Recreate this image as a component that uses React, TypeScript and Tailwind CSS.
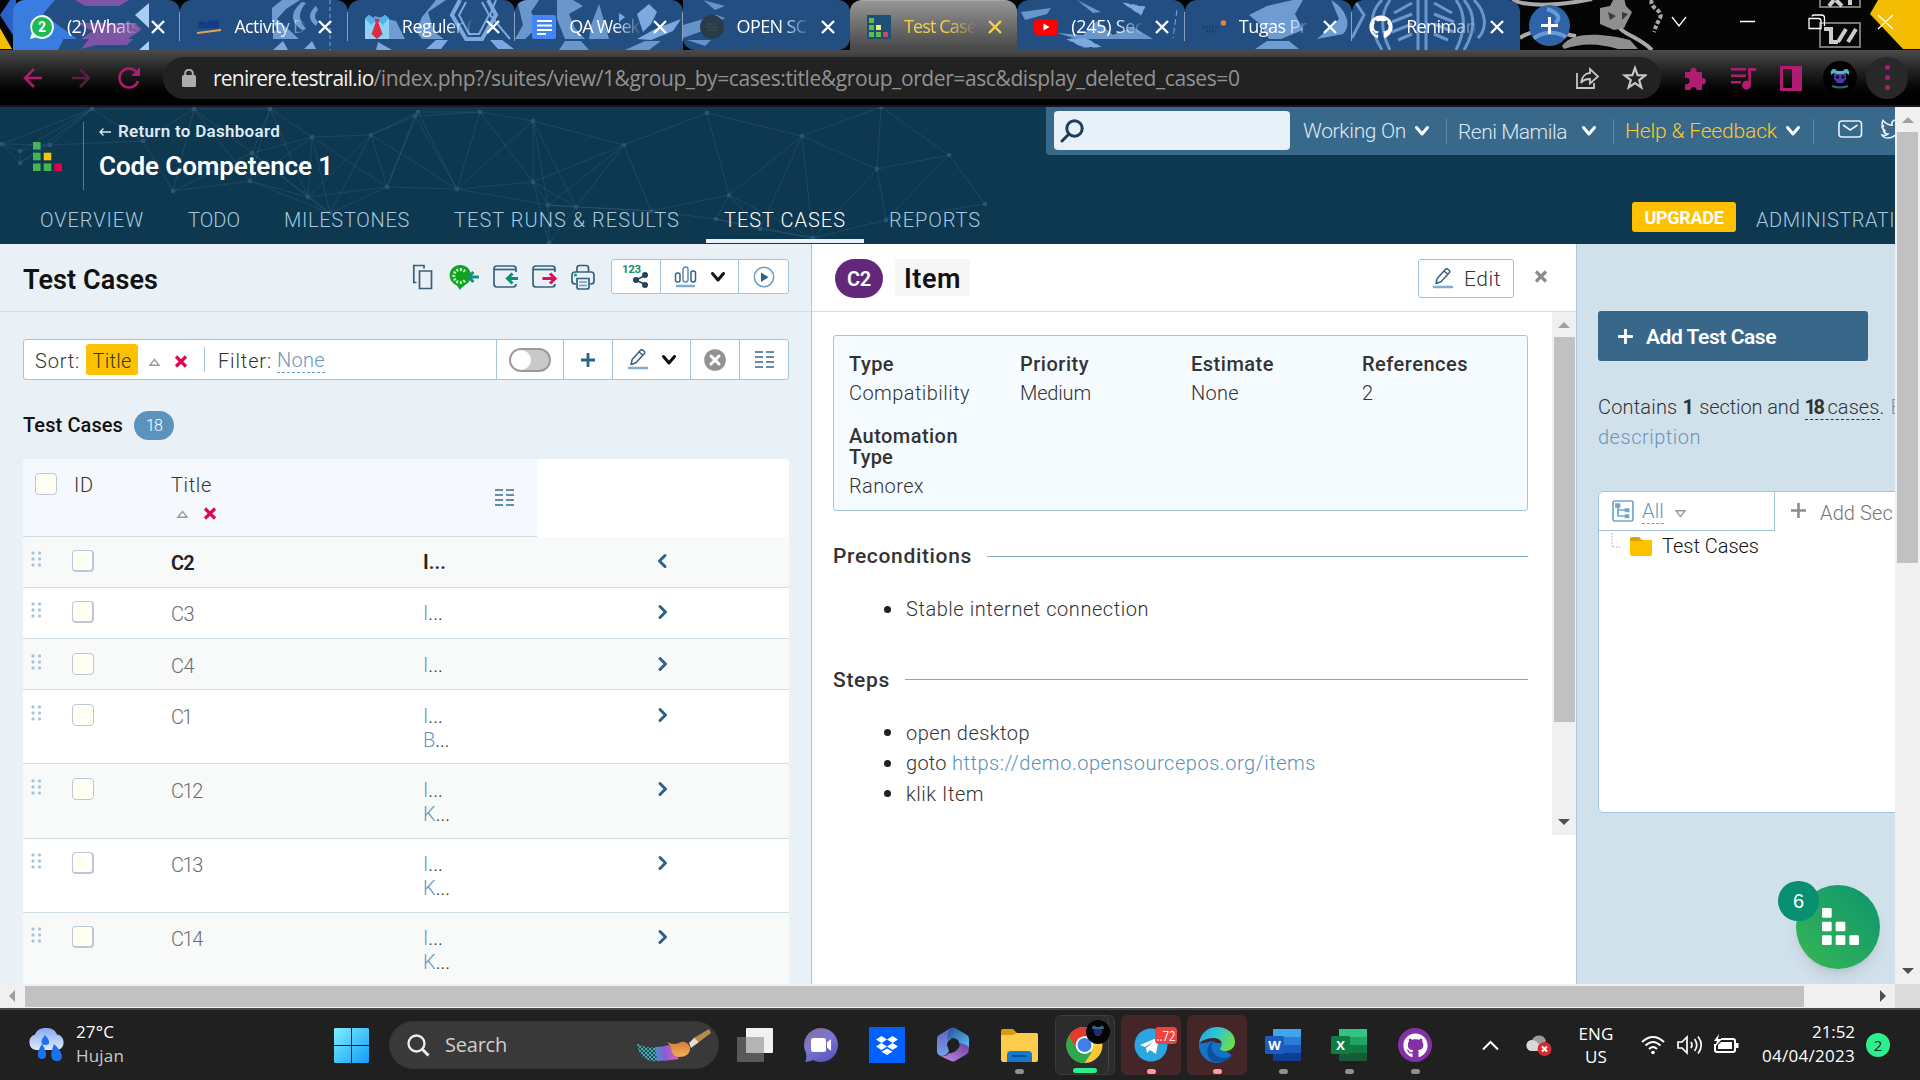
import React, { useLayoutEffect, useRef } from "react";
import { FaGithub } from "react-icons/fa";

/** Single line of text whose tracking is adjusted so that it spans `w` pixels. */
function T({ w, className = "", children }: { w: number; className?: string; children: React.ReactNode }) {
  const ref = useRef<HTMLSpanElement>(null);
  useLayoutEffect(() => {
    const el = ref.current;
    if (!el) return;
    el.style.letterSpacing = "0px";
    const n = (el.textContent || "").length;
    const natural = el.getBoundingClientRect().width;
    el.style.letterSpacing = `${(w - natural) / Math.max(1, n)}px`;
  }, [w]);
  return (
    <span ref={ref} className={"inline-block shrink-0 whitespace-pre " + className}>
      {children}
    </span>
  );
}

const UI = "font-['Open_Sans','Noto_Sans',sans-serif] font-normal";

/* ---------- Browser chrome ---------- */

function StripArt() {
  return (
    <svg className="absolute inset-0" width="1920" height="50" viewBox="0 0 1920 50">
      <rect width="1920" height="50" fill="#050505" />
      <g fill="none" stroke="#a9a9a9" strokeWidth="4">
        <path d="M1512 0c20 8 50 5 80-1M1520 38c20-14 40-4 56-2" />
        <path d="M1652 0c-4 8 12 10 8 18s-4 8-6 14" strokeDasharray="4 2" />
        <path d="M1618 24c2 10 20 12 34 26" />
      </g>
      <path d="M1562 46c10-16 45-12 68-6l8 9h-20c-20-6-36-6-54 0zM1600 8l10-2 4-8h10l2 8 6 6-8 16-10 2-14-6z" fill="#8f8f8f" />
      <path d="M1608 12l8 4-6 4zM1622 12l6 2-6 6z" fill="#3a3a3a" />
      <g fill="none" stroke="#777" strokeWidth="2">
        <rect x="1820" y="-12" width="40" height="19" />
        <rect x="1820" y="23" width="40" height="24" />
      </g>
      <path d="M1824 29h7v13h7M1846 29l-8 13M1856 29l-8 13M1829 6l5-6M1836 0l6 6M1850 0v5" stroke="#ccc" strokeWidth="4" fill="none" />
      <path d="M1870 14l8-14h42v49h-17z" fill="#f5bd02" />
      <path d="M0 28l12 21H0z" fill="#f5bd02" />
      <path d="M0 15L10 0h6v40z" fill="#2a62c8" />
    </svg>
  );
}

function TabArt({ i }: { i: number }) {
  const c = "#7ba9e0";
  return (
    <svg className="absolute inset-0" width="168" height="50" viewBox="0 0 168 50">
      {i === 0 && (
        <g>
          <path d="M0 0h42L30 14l34 25H40v-2L28 50H0z" fill="#3a7de0" />
          <path d="M0 50V38h63l-12 0-6 12z" fill="#3a7de0" />
          <path d="M62 0h54l-10 6H72zM63 23h58l8 6-14 10H68l12-8z" fill="#7e54a4" />
          <path d="M68 49l8-10h44l-6 6H84z" fill="#7e54a4" />
          <path d="M136 3v25l-14-13zM136 41v9h-10z" fill="#a9cdf5" />
        </g>
      )}
      {i === 1 && (
        <g fill={c}>
          <path d="M92 8l10-8h18l-14 9-9 10 10 9 12 11H93V29l6 4-7-12zM122 2c-12 10-12 20 0 28l4-1c-8-9-8-17 0-26zM136 6c-8 7-8 14 0 20l2-4c-4-4-4-8 0-12z" opacity=".85" />
          <path d="M93 50l10-9 5 9zM124 49l8-8 4 8z" />
          <path d="M150 0v50" stroke={c} strokeDasharray="4 3" />
        </g>
      )}
      {i === 2 && (
        <g fill={c}>
          <path d="M26 16l22 5 9 18H26zM98 0l-18 12 6 20 10 7h-22l-6-8 6-14L88 0z" opacity=".85" />
          <g fill="none" stroke={c}>
            <path d="M112 0l-8 15 14 24h16l14-24-8-15" strokeWidth="4" />
            <path d="M118 2l-7 13 10 19h10l10-19-7-13M148 0l-6 15 20 24" strokeWidth="2" />
          </g>
          <path d="M78 49l10-9h12l-7 9zM28 50l2-8 14 8zM150 49l-8-9h12l12 9z" />
        </g>
      )}
      {i === 3 && (
        <g fill={c}>
          <path d="M2 0h22l-8 12 8 14-14 13H0l8-14zM42 0h16l10 6-14 8 6 14 10 11H50l-8-20zM84 4l6 20 4 15H74l2-14z" opacity=".8" />
          <path d="M104 13l6 4-6 5zM122 14l12-10 8 8-6 12-8 8M122 39l18-10 26-10-8 12-22 9z" />
          <path d="M44 50l6-9h16l8 9zM110 50l20-9h16l-12 9z" opacity=".8" />
        </g>
      )}
      {i === 4 && (
        <g fill={c}>
          <path d="M0 25l34-10 8 3-20 12-22 8zM20 0l22 6-10 4zM4 40h24l-6 6z" opacity=".75" />
        </g>
      )}
      {i === 6 && (
        <g fill={c}>
          <path d="M4 12l30-4-4 6-22 6zM60 0l24 12-8 1zM40 33l20 6h76l-20-12-20 8-16-14-14 14z" opacity=".8" />
          <path d="M106 3l22 4-4 8zM50 39l16 8h18l-14-8zM160 10l-4 28" stroke={c} strokeDasharray="6 3" />
        </g>
      )}
      {i === 7 && (
        <g fill={c}>
          <path d="M64 15l18-9 26-6h10l-8 14 8 16-22 9H84L76 25zM146 0c14 8 22 24 12 34l-26 5 22-20zM70 49l12-8h22l10 8z" opacity=".85" />
        </g>
      )}
      {i === 8 && (
        <g fill="none" stroke={c} strokeWidth="3">
          <path d="M2 0l10 15L0 38M74 0v50M66 0v50M60 3l-18 10M60 14l-20 8M60 24l-20 8M60 34l-14 6M82 3l18 10M82 14l20 8M82 24l20 8M82 34l14 6M38 0c-10 14-10 30 0 50M104 0c10 14 10 30 0 50M112 0c12 14 12 30 0 50M30 0c-14 14-12 30 0 50M122 0c12 12 14 28 4 38" opacity=".8" />
        </g>
      )}
    </svg>
  );
}

function Blocks({ size, colors, r = 0 }: { size: number; colors: string[]; r?: number }) {
  const cells = [
    [0, 0], [0, 1], [1, 1], [0, 2], [1, 2], [2, 2],
  ];
  return (
    <svg width={size} height={size} viewBox="0 0 29 29">
      {cells.map(([x, y], k) => (
        <rect key={k} x={x * 10.7} y={y * 10.7} width="7.6" height="7.6" rx={r} fill={colors[k]} />
      ))}
    </svg>
  );
}
const BRAND = ["#44b556", "#44b556", "#fdc400", "#44b556", "#44b556", "#e5004f"];

const tabIcons: React.ReactNode[] = [
  <svg width="24" height="24" viewBox="0 0 24 24"><path d="M12 0a12 12 0 11-6 22.400L0 24l1.800-6A12 12 0 0112 0z" fill="#e9f7ec" /><circle cx="12" cy="12" r="10" fill="#1db954" /><text x="12" y="17" fontSize="14" fontWeight="700" textAnchor="middle" fill="#fff">2</text></svg>,
  <svg width="24" height="24" viewBox="0 0 24 24"><path d="M1 8l4-2 4 2 4-3 5 1 4-1v8H2z" fill="#173a86" /><path d="M0 17l24-3v2L0 19z" fill="#e8a060" /></svg>,
  <svg width="24" height="24" viewBox="0 0 24 24"><path d="M0 4l4-4 6 5h4l6-5 4 4v20H0z" fill="#8fd0f5" /><path d="M0 3l4-3 8 5 8-5 4 3-6 7-6-5-6 5z" fill="#55b0e8" /><path d="M9.500 4h5l-1 4 4 11-5.500 5-5.500-5 4-11z" fill="#dc2b45" /></svg>,
  <svg width="24" height="24" viewBox="0 0 24 24"><rect width="24" height="24" rx="2" fill="#4285f4" /><path d="M5 6h15M5 10.500h15M5 15h15M5 19h9" stroke="#fff" strokeWidth="2" /></svg>,
  <svg width="24" height="24" viewBox="0 0 24 24"><circle cx="12" cy="12" r="12" fill="#2b3a48" /><path d="M7 9h10M6 12h12M8 15h8" stroke="#4a5967" strokeDasharray="2 1" /></svg>,
  <div className="flex h-6 w-6 items-center justify-center bg-[#1f4e79]"><Blocks size={19} colors={["#5cc04e", "#5cc04e", "#f3f06a", "#5cc04e", "#5cc04e", "#c74a6a"]} /></div>,
  <svg width="24" height="24" viewBox="0 0 24 24"><rect y="4" width="24" height="16" rx="3.500" fill="#f00" /><path d="M9.500 8.500v7l6-3.500z" fill="#fff" /></svg>,
  <svg width="24" height="24" viewBox="0 0 24 24"><path d="M1 12h16M4 16h10" stroke="#1b3f70" strokeWidth="3" strokeDasharray="2 1" /><circle cx="21.500" cy="8" r="2.800" fill="#f07c2e" /></svg>,
  <FaGithub className="h-6 w-6 text-white" />,
];

const tabs = [
  { t: "(2) Whats", w: 72 },
  { t: "Activity D", w: 71 },
  { t: "Reguler (", w: 70 },
  { t: "QA Week", w: 70 },
  { t: "OPEN SC", w: 70 },
  { t: "Test Case", w: 72 },
  { t: "(245) Sec", w: 72 },
  { t: "Tugas Pr", w: 68 },
  { t: "Reniman", w: 70 },
];

function TabStrip() {
  return (
    <div className="relative flex h-[50px] shrink-0 overflow-hidden bg-black">
      <StripArt />
      <div className="relative flex pl-[13px]">
        {tabs.map(({ t, w }, i) => {
          const active = i === 5;
          return (
            <div
              key={i}
              className={
                "relative flex h-[50px] w-[167.400px] items-center overflow-hidden " +
                (active
                  ? "rounded-t-xl border-t border-[#a5a5a5] bg-gradient-to-b from-[#969696] to-[#484848]"
                  : i === 4 ? "rounded-tr-xl rounded-b-xl bg-[#224e82]" : "rounded-t-xl bg-[#224e82]")
              }
            >
              <TabArt i={i} />
              <div className="relative flex w-full items-center pt-[3px] pl-[17px]">
                {tabIcons[i]}
                <div className="ml-[13px] w-[73px] [mask-image:linear-gradient(to_right,black_60%,transparent_100%)]">
                  <T w={w} className={"text-[18px] leading-6 " + UI + (active ? " text-[#f7d046]" : " text-white")}>{t}</T>
                </div>
                <svg className="ml-[11px]" width="14" height="14" viewBox="0 0 14 14">
                  <path d="M1 1l12 12M13 1L1 13" stroke={active ? "#f7d046" : "#fff"} strokeWidth="2.400" />
                </svg>
              </div>
              {!active && i !== 4 && i !== 8 && <div className="absolute top-3 right-0 h-[29px] w-px bg-[#8aa0bd]" />}
            </div>
          );
        })}
      </div>
      <div className="relative mt-[5px] ml-[9px] flex h-[41px] w-[41px] items-center justify-center overflow-hidden rounded-full bg-[#2f65a8]">
        <svg width="41" height="41" viewBox="0 0 41 41">
          <path d="M18 4c12 4 14 10 8 14M0 38c12-14 30-12 40-4" fill="none" stroke="#7fb0ea" strokeWidth="4" opacity=".7" />
          <path d="M20.500 12v17M12 20.500h17" stroke="#fff" strokeWidth="3" />
        </svg>
      </div>
      <svg className="relative ml-[100px]" width="240" height="50" viewBox="0 0 240 50" fill="none" stroke="#fff" strokeWidth="1.300">
        <path d="M2 17l7 9 7-9M70 21.500h15M139 18.500h9.500q2.500 0 2.500 2.500v7.500h-12zM142 16.500q0-1.500 2-1.500h7.500q3 0 3 3v8M208 15l15 14M223 15l-15 14" />
      </svg>
    </div>
  );
}

function Toolbar() {
  return (
    <div className="flex h-[57px] shrink-0 items-center border-b-2 border-[#1c1222] bg-gradient-to-b from-[#4b4b4b] via-[#161616] to-black">
      <svg className="ml-[22px] shrink-0" width="120" height="24" viewBox="0 0 120 24" fill="none" stroke="#b01c70" strokeWidth="2.500">
        <path d="M20 12H3M12 3l-9 9 9 9" />
        <path d="M50 12h17M58 3l9 9-9 9" stroke="#5b1d40" />
        <path d="M116 15a9.500 9.500 0 11-2-9.500" />
        <path d="M118 1v9h-9z" fill="#b01c70" stroke="none" />
      </svg>
      <div className="ml-[21px] flex h-[42px] w-[1498px] shrink-0 items-center rounded-full bg-[#222222]">
        <svg className="ml-[19px]" width="14" height="18" viewBox="0 0 14 18">
          <rect y="6" width="14" height="12" rx="1.500" fill="#a9adb1" />
          <path d="M3.200 7V4.500a3.800 3.800 0 017.600 0V7" fill="none" stroke="#a9adb1" strokeWidth="2" />
        </svg>
        <div className={"mt-px ml-[17px] flex text-[21px] leading-7 " + UI}>
          <T w={160.500} className="text-[#f1f1f1]">renirere.testrail.io</T>
          <T w={866} className="text-[#909294]">/index.php?/suites/view/1&amp;group_by=cases:title&amp;group_order=asc&amp;display_deleted_cases=0</T>
        </div>
        <svg className="mr-[14px] ml-auto" width="72" height="26" viewBox="0 0 72 26" fill="none" stroke="#c4c7c5" strokeWidth="1.800">
          <path d="M2 8v15h17v-5" />
          <path d="M6 18c1-7 5-10 9-10V4l8 7.500-8 7v-4.500c-4 0-7 1-9 4z" />
          <path d="M60 3l2.600 7.200 7.600.2-6 4.700 2.100 7.400-6.300-4.300-6.300 4.300 2.100-7.400-6-4.700 7.600-.2z" strokeWidth="2.200" />
        </svg>
      </div>
      <svg className="ml-[23px] shrink-0" width="120" height="26" viewBox="0 0 120 26" fill="#b01c70">
        <path d="M1 7h5.500a3.200 3.200 0 116 0H18v6a3.200 3.200 0 110 6.200V25h-5.500a3 3 0 10-6 0H1v-6a3.300 3.300 0 100-6z" />
        <path d="M47 3h15v2.400H47zM47 9.500h15v2.400H47zM47 16h10v2.400H47zM64 3h8v3h-5v14a4.500 4.500 0 11-2.500-4z" />
        <path d="M96 1h22v25H96zM99 4v19h9V4z" fillRule="evenodd" />
      </svg>
      <svg className="ml-[19px] shrink-0" width="34" height="34" viewBox="0 0 34 34">
        <circle cx="17" cy="17" r="17" fill="#000" />
        <path d="M8 14c-1-7 4-7 6-4h6c2-3 7-3 6 4-2-2-4-2-5-1h-8c-1-1-3-1-5 1z" fill="#4fb8c4" />
        <path d="M11 13h12v5l-3 4h-6l-3-4z" fill="#4a3aa8" />
        <circle cx="14.500" cy="16" r="1.700" fill="#0a0a20" /><circle cx="20" cy="16" r="1.700" fill="#0a0a20" />
        <path d="M9 25q8 3 16 0" stroke="#276a78" strokeWidth="2" fill="none" />
      </svg>
      <div className="ml-[9px] flex h-[42px] w-[42px] flex-col items-center justify-center gap-[5px] rounded-full bg-[#282828]">
        <i className="h-[5px] w-[5px] rounded-full bg-[#b01c70]" />
        <i className="h-[5px] w-[5px] rounded-full bg-[#b01c70]" />
        <i className="h-[5px] w-[5px] rounded-full bg-[#b01c70]" />
      </div>
    </div>
  );
}

/* ---------- Application header ---------- */

const nodes = [
  [2, 144], [20, 151], [20, 163], [50, 145], [92, 109], [143, 141], [173, 191], [194, 109], [270, 109], [252, 153],
  [250, 181], [312, 137], [308, 197], [371, 135], [387, 187], [418, 112], [415, 116], [457, 189], [480, 112],
  [533, 121], [533, 182], [548, 205], [576, 207], [549, 243], [624, 145], [330, 213], [707, 113], [802, 136],
  [877, 169], [729, 195], [716, 219], [760, 229], [813, 238], [886, 220], [949, 155], [985, 204], [881, 107], [651, 211],
];

function Network() {
  const edges: number[][] = [];
  nodes.forEach((a, i) =>
    nodes.forEach((b, j) => {
      if (j > i && Math.hypot(a[0] - b[0], a[1] - b[1]) < 104) edges.push([a[0], a[1], b[0], b[1]]);
    })
  );
  return (
    <svg className="absolute top-0 left-0" width="1040" height="137" viewBox="0 107 1040 137">
      {edges.map(([a, b, c, d], k) => (
        <line key={k} x1={a} y1={b} x2={c} y2={d} stroke="#5f8bab" strokeOpacity=".2" />
      ))}
      {nodes.map(([x, y], k) => (
        <circle key={k} cx={x} cy={y} r="2.300" fill="#2a5573" />
      ))}
    </svg>
  );
}

const Chev = ({ c = "#fff", w = 16, className = "" }: { c?: string; w?: number; className?: string }) => (
  <svg className={"shrink-0 " + className} width={w} height="12" viewBox="0 0 16 12">
    <path d="M2.500 2.500L8 9l5.500-6.500" fill="none" stroke={c} strokeWidth="3" strokeLinecap="round" strokeLinejoin="round" />
  </svg>
);

function Header() {
  return (
    <header className="relative flex h-[137px] shrink-0 flex-col justify-between overflow-hidden bg-[#0e3750]">
      <Network />
      <div className="relative flex justify-between">
        <div className="flex">
          <div className="mt-[35px] ml-[33px]"><Blocks size={29} colors={BRAND} /></div>
          <div className="mt-[15px] ml-[21px] h-[68px] w-px bg-[#4b7f9c]" />
          <div className="ml-[15px] flex flex-col">
            <div className="mt-[13px] flex h-6 items-center">
              <svg className="mr-[7px]" width="12" height="10" viewBox="0 0 12 10" fill="none" stroke="#dfeaf3" strokeWidth="1.300"><path d="M12 5H1M4.500 1.500L1 5l3.500 3.500" /></svg>
              <T w={162} className="text-[17px] font-semibold text-[#dfeaf3]">Return to Dashboard</T>
            </div>
            <T w={234} className="mt-[6px] text-[26px] leading-8 font-semibold text-white">Code Competence 1</T>
          </div>
        </div>
        <div className="flex h-12 w-[849px] items-center overflow-hidden rounded-bl bg-[#39698a]">
          <div className="mb-[1px] ml-2 flex h-[39px] w-[236px] shrink-0 items-center rounded bg-[#e9f1f8]">
            <svg className="ml-[6px]" width="24" height="24" viewBox="0 0 24 24" fill="none" stroke="#1f3f58" strokeWidth="3" strokeLinecap="round"><circle cx="14.500" cy="9.500" r="7.700" /><path d="M9 15l-7 7" /></svg>
          </div>
          <T w={103} className="mt-[2px] ml-[13px] text-[21px] text-[#dbe8f4]">Working On</T>
          <Chev className="ml-[8px]" />
          <div className="ml-[16px] h-[25px] w-px shrink-0 bg-[#5d8cab]" />
          <T w={109} className="mt-[3px] ml-[11px] text-[21px] text-[#dbe8f4]">Reni Mamila</T>
          <Chev className="ml-[14px]" />
          <div className="ml-[16px] h-[25px] w-px shrink-0 bg-[#5d8cab]" />
          <T w={152} className="mt-[2px] ml-[11px] text-[21px] text-[#fdc82b]">Help &amp; Feedback</T>
          <Chev className="ml-[8px]" />
          <div className="ml-[12px] h-[25px] w-px shrink-0 bg-[#5d8cab]" />
          <svg className="mb-1 ml-[24px] shrink-0" width="70" height="22" viewBox="0 0 70 22" fill="none" stroke="#e6f0f8" strokeWidth="1.600">
            <rect x="1" y="3" width="22.500" height="16" rx="3" /><path d="M5 7l7.300 5L19.500 7" />
            <path d="M44 17c3 1 5 0 6-1-2 0-4-1-4.500-3h2c-2-1-3.500-2.500-3.500-5l2 .7c-2-1.700-2-4.500-1-6.200 2.500 3 5.500 4.500 9 4.700C53 2 59 .5 61 4l3-1-2 3c0 8-5 14-12 14-3 0-5-1-6-3z" />
          </svg>
        </div>
      </div>
      <nav className="relative flex h-[45px] items-start pl-[40px] text-[20px] leading-7 text-[#a6c9df]">
        <T w={104} className="mt-[7px]">OVERVIEW</T>
        <T w={52} className="mt-[7px] ml-[44px]">TODO</T>
        <T w={126} className="mt-[7px] ml-[44px]">MILESTONES</T>
        <T w={226} className="mt-[7px] ml-[44px]">TEST RUNS &amp; RESULTS</T>
        <div className="ml-[26px] flex h-[44px] w-[158px] shrink-0 justify-center border-b-[4px] border-[#e9f1fb] pt-[7px] text-white">
          <T w={122}>TEST CASES</T>
        </div>
        <T w={92} className="mt-[7px] ml-[25px]">REPORTS</T>
        <div className="mt-[3px] ml-[651px] flex h-[30px] w-[104px] shrink-0 items-center justify-center rounded-[3px] bg-[#fdc100]">
          <T w={79} className="mt-px text-[18px] font-bold text-white">UPGRADE</T>
        </div>
        <T w={139} className="mt-[7px] ml-[20px]">ADMINISTRATI</T>
      </nav>
    </header>
  );
}

/* ---------- Small glyphs ---------- */

const Tri = ({ down = false, w = 13 }: { down?: boolean; w?: number }) => (
  <svg className={down ? "shrink-0 rotate-180" : "shrink-0"} width={w} height="8" viewBox="0 0 13 8"><path d="M2 7.200L6.500 1.400 11 7.200z" fill="none" stroke="#9b9b9b" strokeWidth="1.400" /></svg>
);
const Cross = ({ c = "#dc0a4c" }: { c?: string }) => (
  <svg className="shrink-0" width="14" height="13" viewBox="0 0 14 13"><path d="M2 1.500l10 10M12 1.500l-10 10" stroke={c} strokeWidth="3.200" /></svg>
);
const Cols = () => (
  <svg width="19" height="17" viewBox="0 0 19 17" fill="none">
    {[1, 6, 11, 16].map((y, k) => <path key={y} d={`M0 ${y}h8M11 ${y}h8`} stroke={k % 2 ? "#2f6a99" : "#3c6580"} strokeWidth="1.700" />)}
  </svg>
);
const Pencil = () => (
  <svg className="shrink-0" width="22" height="21" viewBox="0 0 22 21" fill="none">
    <path d="M4 15.500l1.200-5L13.500 1.200q1-1 2.200 0l1.500 1.300q1 1 .2 2L9 13.700zM12 3l3.800 3.300" stroke="#35617f" strokeWidth="1.500" strokeLinejoin="round" />
    <path d="M2 19h18" stroke="#7fabd0" strokeWidth="2.600" strokeLinecap="round" />
  </svg>
);
const Check = ({ b = false }: { b?: boolean }) => (
  <div className={"h-[22px] w-[22px] shrink-0 rounded border border-[#bcc6dd] bg-[#fffff2]" + (b ? " border-r-2 border-b-2" : "")} />
);

/* ---------- Left panel ---------- */

function HeaderIcons() {
  return (
    <svg width="184" height="28" viewBox="0 0 184 28" fill="none" stroke="#35617f" strokeWidth="1.700">
      <path d="M4.500 19.500H1.800V2.500H12v3M7.500 8h12v17.500h-12z" />
      <path d="M49 2a10.500 10.500 0 014 20q-4 3-5 5l-3-4.500A10.500 10.500 0 0149 2z" fill="#0fa31f" stroke="none" />
      <path d="M53 8.500a6.500 6.500 0 100 9" stroke="#c8f0cc" strokeWidth="3" strokeDasharray="2 1.500" />
      <path d="M67 14H57M61.500 9l-5 5 5 5" stroke="#1b8f7c" strokeWidth="3" />
      <path d="M104 9V5.500Q104 3 101 3H85q-3 0-3 3v15q0 3 3 3h16q3 0 3-3" />
      <path d="M82 6.500h22" />
      <path d="M106 15.500H95M100.500 10.500l-5 5 5 5" stroke="#0f8f72" strokeWidth="3" />
      <path d="M143 9V5.500Q143 3 140 3h-16q-3 0-3 3v15q0 3 3 3h16q3 0 3-3" />
      <path d="M121 6.500h22" />
      <path d="M130.500 15.500h12M138 10.500l5 5-5 5" stroke="#e00a60" strokeWidth="3" />
      <path d="M165 9V5q0-2.500 2.500-2.500H174q2.500 0 2.500 2.500v4M164 21h-1q-3 0-3-3v-6q0-3 3-3h16q3 0 3 3v6q0 3-3 3h-1" />
      <path d="M165 15.500h12V24q0 2-2 2h-8q-2 0-2-2z" />
      <path d="M167 19h8M167 22.500h8" stroke="#6fa0c4" />
      <circle cx="163.500" cy="12" r="1.600" fill="#0f9f7c" stroke="none" />
    </svg>
  );
}

const rows = [
  { id: "C2", w: 23, lines: ["I"], h: "h-[51px]", bold: true },
  { id: "C3", w: 23, lines: ["I"], h: "h-[51px]" },
  { id: "C4", w: 23, lines: ["I"], h: "h-[51px] pt-px" },
  { id: "C1", w: 20, lines: ["I", "B"], h: "h-[74px] pt-px" },
  { id: "C12", w: 31, lines: ["I", "K"], h: "h-[75px] pt-px" },
  { id: "C13", w: 31, lines: ["I", "K"], h: "h-[74px]" },
  { id: "C14", w: 31, lines: ["I", "K"], h: "h-[74px]" },
];

function LeftPanel() {
  return (
    <section className="flex w-[812px] shrink-0 flex-col overflow-hidden border-r border-[#a9c8de] bg-[#e9f0f6]">
      <div className="flex h-[68px] shrink-0 items-start border-b border-[#cfdde6] pl-[23px]">
        <T w={135} className="mt-[20px] text-[27px] leading-8 font-semibold text-[#111]">Test Cases</T>
        <div className="mt-[19px] ml-[254px]"><HeaderIcons /></div>
        <div className="mt-[15px] ml-[15px] flex h-[35px] w-[178px] rounded-[3px] border border-[#a3c6df] bg-white">
          <div className="flex w-[49px] items-center justify-center border-r border-[#a3c6df]">
            <svg width="28" height="25" viewBox="0 0 28 25">
              <text x="0" y="9" fontSize="11.500" fontWeight="700" fill="#0f8f72" textLength="19">123</text>
              <path d="M24 11l-10 5 10 5" stroke="#24435c" strokeWidth="1.600" fill="none" />
              <circle cx="23" cy="11" r="3" fill="#24435c" /><circle cx="14" cy="16" r="3" fill="#24435c" /><circle cx="23" cy="21" r="3" fill="#24435c" />
            </svg>
          </div>
          <div className="flex w-[78px] items-center justify-center gap-[13px] border-r border-[#a3c6df]">
            <svg width="23" height="22" viewBox="0 0 23 22" fill="none" stroke="#35617f" strokeWidth="1.500"><rect x="1.500" y="7" width="4.500" height="9" rx="2" /><rect x="9" y="1" width="5" height="15" rx="2.300" stroke="#5a8db5" /><rect x="17" y="5" width="4.500" height="11" rx="2" /><path d="M2 20h19" stroke="#7fabd0" strokeWidth="2.500" /></svg>
            <Chev c="#111" />
          </div>
          <div className="flex grow items-center justify-center">
            <svg width="22" height="22" viewBox="0 0 22 22"><circle cx="11" cy="11" r="9.700" fill="#fff" stroke="#6f9fc4" strokeWidth="1.500" /><path d="M8 6.500v9.500l7.500-4.700z" fill="#2c5f86" /></svg>
          </div>
        </div>
      </div>
      <div className="mt-[27px] ml-[23px] flex h-[41px] w-[766px] shrink-0 items-stretch rounded-[3px] border border-[#a3c6df] bg-white text-[20px] text-[#333]">
        <div className="flex w-[473px] items-center border-r border-[#a3c6df] pl-[11px]">
          <T w={45} className="mt-[2px]">Sort:</T>
          <div className="ml-[6px] flex h-[31px] w-[52px] items-center justify-center rounded-[3px] bg-[#fdc100] pt-[2px]"><T w={39}>Title</T></div>
          <div className="mt-1 ml-[10px]"><Tri /></div>
          <div className="mt-1 ml-[13px]"><Cross /></div>
          <div className="ml-[16px] h-[25px] w-px bg-[#a3c6df]" />
          <T w={54} className="mt-[2px] ml-[13px]">Filter:</T>
          <T w={48} className="mt-[2px] ml-[5px] border-b-[1.500px] border-dashed border-[#6d9cc4] leading-[23px] text-[#6b95bd]">None</T>
        </div>
        <div className="flex w-[67px] items-center justify-center border-r border-[#a3c6df]">
          <div className="h-6 w-[42px] rounded-full border-2 border-[#9a9a9a] bg-[#c9c9c9]"><div className="h-5 w-5 rounded-full bg-white" /></div>
        </div>
        <div className="flex w-[49px] items-center justify-center border-r border-[#a3c6df]">
          <svg width="16" height="16" viewBox="0 0 16 16"><path d="M8 1v14M1 8h14" stroke="#2c6188" strokeWidth="2.800" /></svg>
        </div>
        <div className="flex w-[78px] items-center justify-center gap-[12px] border-r border-[#a3c6df]"><Pencil /><Chev c="#111" /></div>
        <div className="flex w-[49px] items-center justify-center border-r border-[#a3c6df]">
          <svg width="22" height="22" viewBox="0 0 22 22"><circle cx="11" cy="11" r="10.800" fill="#929292" /><path d="M7 7l8 8M15 7l-8 8" stroke="#fff" strokeWidth="3" strokeLinecap="round" /></svg>
        </div>
        <div className="flex grow items-center justify-center"><Cols /></div>
      </div>
      <div className="mt-[31px] ml-[23px] flex h-[29px] shrink-0 items-center">
        <T w={100} className="mb-px text-[20px] font-medium text-[#111]">Test Cases</T>
        <div className="ml-[11px] flex h-[29px] w-[40px] items-center justify-center rounded-full bg-[#5b93bd]"><T w={16} className="mt-px text-[16px] text-white">18</T></div>
      </div>
      <div className="mt-[19px] ml-[23px] w-[766px] shrink-0 rounded-t bg-white">
        <div className="flex h-[78px] w-[514px] rounded-tl border-b border-[#cfdde6] bg-[#f5f9fd] text-[20px] leading-7 text-[#333]">
          <div className="mt-[14px] ml-[12px]"><Check /></div>
          <T w={20} className="mt-[12px] ml-[17px]">ID</T>
          <div className="mt-[12px] ml-[77px] w-[50px]">
            <T w={41}>Title</T>
            <div className="mt-[8px] flex items-center gap-[14px] pl-[5px]"><Tri /><Cross /></div>
          </div>
          <div className="mt-[30px] ml-[274px]"><Cols /></div>
        </div>
        {rows.map((r, i) => (
          <div key={r.id} className={"flex items-start border-b border-[#cfdde6] " + r.h + (i % 2 ? " bg-white" : " bg-[#f8f9f9]")}>
            <svg className="mt-[14px] ml-[8px]" width="11" height="17" viewBox="0 0 11 17" fill="#a5c3da">
              {[2, 8, 14].map((y) => <React.Fragment key={y}><rect x=".5" y={y - 1.500} width="3" height="3" rx="1" /><rect x="7" y={y - 1.500} width="3" height="3" rx="1" /></React.Fragment>)}
            </svg>
            <div className="mt-[13px] ml-[30px]"><Check b={i !== 2 && i !== 3 && i !== 4} /></div>
            <div className={"mt-[12px] ml-[77px] w-[252px] text-[20px] leading-7 " + (r.bold ? "font-semibold text-[#222]" : "text-[#6d6d6d]")}><T w={r.w}>{r.id}</T></div>
            <div className={"mt-[14px] w-[230px] text-[20px] leading-[23.500px] " + (r.bold ? "font-semibold text-[#222]" : "text-[#6b95bd]")}>
              {r.lines.map((l, k) => <div key={k}>{l}<span className="text-[#333]">...</span></div>)}
            </div>
            <svg className={"mt-[16px] " + (i === 0 ? "ml-[3px] rotate-180" : "ml-[4px]")} width="12" height="16" viewBox="0 0 12 16"><path d="M3 2.500L8.500 8 3 13.500" fill="none" stroke="#2c6188" strokeWidth="3" strokeLinecap="round" strokeLinejoin="round" /></svg>
          </div>
        ))}
      </div>
    </section>
  );
}

/* ---------- Middle panel ---------- */

function Arrow({ dir, c }: { dir: "up" | "down" | "left" | "right"; c: string }) {
  const d = { up: "M0 6l6-6 6 6z", down: "M0 0l6 6 6-6z", left: "M6 0L0 6l6 6z", right: "M0 0l6 6-6 6z" }[dir];
  const v = dir === "up" || dir === "down";
  return <svg className="shrink-0" width={v ? 12 : 6} height={v ? 6 : 12} viewBox={v ? "0 0 12 6" : "0 0 6 12"}><path d={d} fill={c} /></svg>;
}

function Field({ label, lw, value, vw, label2 }: { label: string; lw: number; value: string; vw: number; label2?: string }) {
  return (
    <div className="flex w-[171px] shrink-0 flex-col items-start text-[20px] text-[#333]">
      <T w={lw} className="leading-[21px] font-medium">{label}</T>
      {label2 && <T w={44} className="leading-[21px] font-medium">{label2}</T>}
      <T w={vw} className="mt-[4px] leading-7">{value}</T>
    </div>
  );
}

function Section({ title, w, className = "" }: { title: string; w: number; className?: string }) {
  return (
    <div className={"flex h-7 w-[695px] items-center gap-[15px] " + className}>
      <T w={w} className="mt-[2px] text-[21px] font-medium text-[#333]">{title}</T>
      <div className="h-px grow bg-[#7fa9c4]" />
    </div>
  );
}

function Item({ children }: { children: React.ReactNode }) {
  return (
    <li className="flex h-[30.500px] items-center pt-[2px] pl-[51px] text-[20px] text-[#333]">
      <i className="mr-[15px] h-[7px] w-[7px] rounded-full bg-[#222]" />
      {children}
    </li>
  );
}

function MiddlePanel() {
  return (
    <section className="flex w-[765px] shrink-0 flex-col border-r border-[#a9c8de] bg-white">
      <div className="flex h-[68px] shrink-0 items-start border-b border-[#d5dfe3] pl-[23px]">
        <div className="mt-[15px] flex h-[39px] w-[48px] items-center justify-center rounded-[20px] bg-[#64287a] pt-px"><T w={24} className="text-[20px] font-semibold text-white">C2</T></div>
        <div className="mt-[15px] ml-[12px] flex h-[37px] w-[75px] items-center justify-center bg-[#f6f6f6] pt-[4px]"><T w={57} className="text-[27px] font-semibold text-[#111]">Item</T></div>
        <div className="mt-[15px] ml-[448px] flex h-[39px] w-[96px] items-center rounded-[3px] border border-[#9fc2da] pl-[13px]">
          <Pencil /><T w={37} className="mt-[2px] ml-[10px] text-[21px] text-[#333]">Edit</T>
        </div>
        <div className="mt-[26px] ml-[20px]"><Cross c="#8c8c8c" /></div>
      </div>
      <div className="flex h-[523px]">
        <div className="w-[740px] pl-[21px]">
          <div className="mt-[23px] h-[176px] w-[695px] rounded-[3px] border border-[#a3c6df] bg-[#f6fbff] pt-[18px] pl-[15px]">
            <div className="flex">
              <Field label="Type" lw={45} value="Compatibility" vw={121} />
              <Field label="Priority" lw={69} value="Medium" vw={71} />
              <Field label="Estimate" lw={83} value="None" vw={48} />
              <Field label="References" lw={106} value="2" vw={12} />
            </div>
            <div className="mt-[19px]"><Field label="Automation" label2="Type" lw={109} value="Ranorex" vw={75} /></div>
          </div>
          <Section title="Preconditions" w={139} className="mt-[31px]" />
          <ul className="mt-[23px]"><Item><T w={243}>Stable internet connection</T></Item></ul>
          <Section title="Steps" w={57} className="mt-[42px]" />
          <ul className="mt-[23px]">
            <Item><T w={124}>open desktop</T></Item>
            <Item><T w={46}>goto </T><T w={364} className="text-[#5b8fb9]">https://demo.opensourcepos.org/items</T></Item>
            <Item><T w={78}>klik Item</T></Item>
          </ul>
        </div>
        <div className="flex w-6 flex-col items-center justify-between bg-[#f0f0f0] pt-[10px] pb-[10px]">
          <div className="flex flex-col items-center gap-[9px]"><Arrow dir="up" c="#a0a0a0" /><div className="h-[385px] w-[21px] bg-[#c1c1c1]" /></div>
          <Arrow dir="down" c="#505050" />
        </div>
      </div>
    </section>
  );
}

/* ---------- Right panel ---------- */

function RightPanel() {
  return (
    <section className="w-[318px] shrink-0 overflow-hidden bg-[#d1e1eb] pl-[21px]">
      <div className="mt-[67px] flex h-[50px] w-[270px] items-center rounded-[3px] bg-[#38678a] pl-5">
        <svg className="mr-[13px]" width="15" height="15" viewBox="0 0 15 15"><path d="M7.500 1v13M1 7.500h13" stroke="#fff" strokeWidth="2.800" strokeLinecap="round" /></svg>
        <T w={130} className="mt-[4px] text-[21px] font-semibold text-white">Add Test Case</T>
      </div>
      <div className="mt-[31px] flex h-[30px] items-center text-[20px] text-[#333]">
        <T w={84.500}>Contains </T><T w={12} className="font-bold">1</T><T w={110}> section and </T>
        <span className="mt-px flex border-b-[1.500px] border-dashed border-[#333] leading-[23px]"><T w={18} className="font-bold">18</T><T w={57}> cases</T></span>
        <T w={11}>. </T><span className="text-[#6b95bd]">E</span>
      </div>
      <div className="flex h-[30px] items-center text-[20px] text-[#6b95bd]"><T w={103}>description</T></div>
      <div className="mt-[39px] h-[322px] w-[400px] rounded-[5px] border border-[#a3c6df] bg-white">
        <div className="flex h-[39px]">
          <div className="flex h-[39px] w-[176px] items-center border-r border-b border-[#a3c6df] pl-[13px]">
            <svg width="22" height="22" viewBox="0 0 22 22" fill="none" stroke="#6fa6cb" strokeWidth="1.700"><rect x="1" y="1" width="20" height="20" rx="1.500" /><path d="M6 6v10h10M6 10h10" /><path d="M4 4h3.500v3H4zM13.500 9h3v2.500h-3zM13.500 15h3v2.500h-3z" fill="#6fa6cb" /></svg>
            <T w={22} className="mt-[2px] ml-[8px] border-b-[1.500px] border-dashed border-[#6d9cc4] text-[20px] leading-[23px] text-[#6b95bd]">All</T>
            <div className="mt-[5px] ml-[10px]"><Tri down /></div>
          </div>
          <div className="flex items-center pt-[2px] pl-[16px] text-[20px] text-[#757575]">
            <svg className="mr-[14px] mb-1" width="15" height="15" viewBox="0 0 15 15"><path d="M7.500 0v15M0 7.500h15" stroke="#8d8d8d" strokeWidth="2.600" /></svg>
            <T w={73}>Add Sec</T>
          </div>
        </div>
        <div className="flex h-[30px] items-center pl-[12px]">
          <svg width="11" height="15" viewBox="0 0 11 15" className="mb-3"><path d="M1 0v14h10" fill="none" stroke="#8fb3cc" strokeDasharray="1.500 1.500" /></svg>
          <svg className="ml-2" width="22" height="19" viewBox="0 0 22 19"><path d="M0 2q0-2 2-2h7l3 3h10v8H0z" fill="#d9a400" /><path d="M0 4h12l2-1h6q2 0 2 2v12q0 2-2 2H2q-2 0-2-2z" fill="#fdc100" /></svg>
          <T w={97} className="ml-[10px] text-[20px] text-[#111]">Test Cases</T>
        </div>
      </div>
    </section>
  );
}

/* ---------- Task bar ---------- */

function TaskIcon({ children, dot, frame = "" }: { children: React.ReactNode; dot?: string; frame?: string }) {
  return (
    <div className={"relative flex h-[60px] w-[60px] shrink-0 items-center justify-center rounded-md " + frame}>
      {children}
      {dot && <i className={"absolute bottom-[1px] h-[5px] rounded-full " + dot} />}
    </div>
  );
}

function Office({ l, a, b, c, d, plate }: { l: string; a: string; b: string; c: string; d: string; plate: string }) {
  return (
    <svg width="36" height="34" viewBox="0 0 36 34">
      <rect x="8" y="1" width="28" height="8.500" fill={a} /><rect x="8" y="9" width="28" height="8" fill={b} /><rect x="8" y="17" width="28" height="8" fill={c} /><rect x="8" y="25" width="28" height="8" fill={d} />
      <rect y="8" width="19" height="18" rx="1.500" fill={plate} />
      <text x="9.500" y="22" fontSize="13" fontWeight="700" textAnchor="middle" fill="#fff">{l}</text>
    </svg>
  );
}

function TaskBar() {
  const gray = "w-[9px] bg-[#8f8f8f]";
  return (
    <footer className={"flex h-[72px] shrink-0 items-center border-t-2 border-[#454545] bg-[#202020] text-white " + UI}>
      <svg className="ml-[28px] shrink-0" width="38" height="34" viewBox="0 0 38 34">
        <defs><linearGradient id="cl" x1="0" y1="0" x2="0" y2="1"><stop offset="0" stopColor="#86aaf0" /><stop offset="1" stopColor="#dfe9fb" /></linearGradient></defs>
        <path d="M8 22a8 8 0 01-1-15.500C9 1 14 0 18 0s9 1 11 6.500A8 8 0 0130 22z" fill="url(#cl)" />
        <path d="M17 7c-5 6-4.500 10 .5 10s5-4 -.5-10zM14 16c-6 9-5 15 0 15s6-6 0-15zM26 16c-4 10-4 17 3 17s7-8-3-17z" fill="#1b72ee" />
      </svg>
      <div className="mb-[2px] ml-[10px] flex w-[248px] shrink-0 flex-col text-[17px] leading-[24px]">
        <T w={38} className="self-start">27°C</T>
        <T w={48} className="self-start text-[#c9c9c9]">Hujan</T>
      </div>
      <svg className="ml-[10px] shrink-0" width="35" height="35" viewBox="0 0 35 35">
        <defs><linearGradient id="win" x1="0" y1="0" x2="1" y2="1"><stop offset="0" stopColor="#7df0ff" /><stop offset="1" stopColor="#129bf5" /></linearGradient></defs>
        <path d="M1 0h16v17H0V1zM18 0h16l1 1v16H18zM0 18h17v17H1l-1-1zM18 18h17v16l-1 1H18z" fill="url(#win)" />
      </svg>
      <div className="ml-[20px] flex h-[48px] w-[330px] shrink-0 items-center rounded-full border border-[#353536] bg-[#39393a]">
        <svg className="ml-[17px]" width="23" height="23" viewBox="0 0 23 23" fill="none" stroke="#eee" strokeWidth="2.300"><circle cx="9.500" cy="9.500" r="8" /><path d="M15.500 15.500l6 6" strokeWidth="3" /></svg>
        <T w={62} className="mb-px ml-[15px] text-[20px] text-[#cfcfcf]">Search</T>
        <svg className="ml-[130px] shrink-0" width="76" height="34" viewBox="0 0 76 34">
          <defs>
            <linearGradient id="br" x1="0" y1="0" x2="1" y2="0"><stop offset="0" stopColor="#4a8fc4" /><stop offset=".4" stopColor="#8a5fd0" /><stop offset="1" stopColor="#e858c0" /></linearGradient>
            <linearGradient id="hd" x1="0" y1="0" x2="0" y2="1"><stop offset="0" stopColor="#d97a3c" /><stop offset="1" stopColor="#f0b455" /></linearGradient>
            <pattern id="dt" width="4" height="4" patternUnits="userSpaceOnUse"><rect width="2.200" height="2.200" fill="#35b0b8" /><rect x="2" y="2" width="2.200" height="2.200" fill="#35b0b8" /></pattern>
          </defs>
          <path d="M0 15q9 6 20 4l2 14q-20 2-22-18z" fill="url(#dt)" />
          <path d="M18 19q8 0 14-2l10 14q-12 2-22 2z" fill="url(#br)" />
          <path d="M30 14q8 4 14 0 6-1 9 5 1 10-12 10-4-1-6-5-1-6-5-10z" fill="url(#hd)" />
          <path d="M52 15l6-6 4 5-8 6z" fill="#e9d8cf" />
          <path d="M57 10L72 1l2 4-12 9z" fill="#b98b4a" />
        </svg>
      </div>
      <div className="ml-[6px] flex items-center gap-[6px]">
        <TaskIcon><svg width="36" height="34" viewBox="0 0 36 34"><rect y="9" width="27" height="25" rx="1" fill="#595959" /><rect x="9" width="27" height="25" rx="1" fill="#f1f1f1" /><rect x="9" y="9" width="18" height="16" fill="#b4b4b4" /></svg></TaskIcon>
        <TaskIcon>
          <svg width="34" height="34" viewBox="0 0 34 34">
            <defs><linearGradient id="zm" x1="0" y1="0" x2=".6" y2="1"><stop offset="0" stopColor="#8a6a9c" /><stop offset=".5" stopColor="#7c78d0" /><stop offset="1" stopColor="#5c58c0" /></linearGradient></defs>
            <path d="M17 0a17 17 0 11-8 32q-4 2-8 2 2-3 1-9A17 17 0 0117 0z" fill="url(#zm)" /><rect x="7" y="10" width="15" height="14" rx="2.500" fill="#fff" /><path d="M23 14.500l4-3.500v12l-4-3.500z" fill="#fff" />
          </svg>
        </TaskIcon>
        <TaskIcon><svg width="36" height="36" viewBox="0 0 36 36"><rect width="36" height="36" fill="#0061fe" /><path d="M12.500 9l5.500 3.500-5.500 3.500L7 12.500zM23.500 9l5.500 3.500-5.500 3.500-5.500-3.500zM12.500 16l5.500 3.500-5.500 3.500L7 19.500zM23.500 16l5.500 3.500-5.500 3.500-5.500-3.500zM18 21.500l5.500 3.200L18 28l-5.500-3.300z" fill="#fff" /></svg></TaskIcon>
        <TaskIcon>
          <svg width="34" height="36" viewBox="0 0 34 36">
            <defs>
              <linearGradient id="m1" x1="0" y1="0" x2="0" y2="1"><stop offset="0" stopColor="#6a5fc0" /><stop offset="1" stopColor="#6fa3e8" /></linearGradient>
              <linearGradient id="m2" x1="0" y1="0" x2="1" y2="1"><stop offset="0" stopColor="#2a4f9a" /><stop offset="1" stopColor="#56c4f5" /></linearGradient>
              <linearGradient id="m3" x1="0" y1="1" x2="1" y2="0"><stop offset="0" stopColor="#c48ae6" /><stop offset="1" stopColor="#6a3f9c" /></linearGradient>
            </defs>
            <path d="M15 1L3 8q-2 1-2 4v12q0 4 4 5 6 0 8-5l-2-6q0-4 4-6l5-9z" fill="url(#m1)" />
            <path d="M15 1q2-1 4 0l12 7q2 1 2 4v10q-1-3-4-4l-6-2q0-4-6-5-4 0-5 3-2-8 3-13z" fill="url(#m2)" />
            <path d="M33 21q0 4-2 6l-12 7q-2 1-4 0L4 29q6 1 9-3 4 1 8-3 4-4 2-7l7 2q3 1 3 3z" fill="url(#m3)" />
            <path d="M17 12l5 3v6l-5 3-5-3v-6z" fill="#202020" />
          </svg>
        </TaskIcon>
        <TaskIcon dot={gray}><svg width="37" height="33" viewBox="0 0 37 33"><path d="M0 2q0-2 2-2h10l4 4h19q2 0 2 2v8H0z" fill="#d99a0e" /><path d="M0 6h12l4-2h19q2 0 2 2v25q0 2-2 2H2q-2 0-2-2z" fill="#fccd4c" /><path d="M6 33v-7q0-4 4-4h17q4 0 4 4v7z" fill="#1379cf" /><path d="M11 27h15" stroke="#0a4f96" strokeWidth="2" /></svg></TaskIcon>
        <TaskIcon frame="bg-[#2c2c2c] border border-[#3b3b3b]" dot="w-6 bg-[#2fee8e]">
          <div className="absolute top-0 right-[5px] h-[58px] w-2 rounded-r-md border-r border-[#454545]" />
          <svg width="60" height="60" viewBox="0 0 60 60" className="absolute">
            <circle cx="29.500" cy="30" r="18" fill="#fcc934" />
            <path d="M29.500 30L13.900 21A18 18 0 0145.100 21H29.500z" fill="#e33b2e" />
            <path d="M29.500 48A18 18 0 0113.900 21l8 13.500 7.600 4.500 4-1z" fill="#2da94f" />
            <path d="M29.500 12a18 18 0 0115.600 9H29.500l-8 13.500L13.900 21a18 18 0 0115.600-9z" fill="#e33b2e" />
            <path d="M13.900 21l7.600 13.500 8 4.500-3 8.700A18 18 0 0113.900 21z" fill="#2da94f" />
            <path d="M26.500 47.700L34 37h3l-7.500 11z" fill="#2da94f" />
            <circle cx="29.500" cy="30" r="8.800" fill="#fff" /><circle cx="29.500" cy="30" r="7" fill="#3f7fe8" />
            <circle cx="43" cy="17" r="12" fill="#050505" /><path d="M37 14c0-4 3-4 4-2h4c1-2 4-2 4 2z" fill="#2b6f80" /><path d="M39 14h8v4l-2 3h-4l-2-3z" fill="#2c2a74" />
          </svg>
        </TaskIcon>
        <TaskIcon frame="bg-[#442628]" dot="w-[9px] bg-[#ff9aa5]">
          <svg width="60" height="60" viewBox="0 0 60 60" className="absolute">
            <circle cx="30" cy="30" r="16.500" fill="#2ca5e0" /><path d="M19 30l19-8-3 17-6-4-3 3-1-5 8-7-9 6z" fill="#fff" />
            <rect x="34" y="12" width="22" height="17" rx="4" fill="#f0433f" /><text x="35.500" y="25.500" fontSize="14" fill="#fff" textLength="19" lengthAdjust="spacingAndGlyphs">..72</text>
          </svg>
        </TaskIcon>
        <TaskIcon frame="bg-[#442628]" dot="w-[9px] bg-[#ff9aa5]">
          <svg width="36" height="36" viewBox="0 0 36 36">
            <defs><linearGradient id="ed" x1="0" y1="0" x2="1" y2=".4"><stop offset="0" stopColor="#1f9fe0" /><stop offset=".5" stopColor="#2fc3d8" /><stop offset="1" stopColor="#66dd55" /></linearGradient></defs>
            <path d="M0 17a18 18 0 0032 11l-8-6 1-6H10z" fill="#1373c8" />
            <path d="M0 17a18 18 0 0018 19q8 0 14-8L14 14z" fill="#1373c8" />
            <path d="M18 13c-7 1-8 13 2 17 6 2 11 0 14-3-6 10-18 10-23 5-5-6-3-17 7-19z" fill="#0d4f9c" />
            <path d="M0 17C1 6 9 0 18 0c11 0 18 7 18 15 0 6-5 9-9 9-6 0-7-2-5-4 3-5-2-9-7-9C7 11 2 14 0 17z" fill="url(#ed)" />
          </svg>
        </TaskIcon>
        <TaskIcon dot={gray}><Office l="W" a="#41a5ee" b="#2b7cd3" c="#185abd" d="#103f91" plate="#1b5cbe" /></TaskIcon>
        <TaskIcon dot={gray}><Office l="X" a="#33c481" b="#21a366" c="#107c41" d="#185c37" plate="#107c41" /></TaskIcon>
        <TaskIcon dot={gray}><div className="flex h-[34px] w-[34px] items-center justify-center rounded-full bg-[#8430a6]"><FaGithub className="h-[25px] w-[25px] text-white" /></div></TaskIcon>
      </div>
      <svg className="ml-[37px] shrink-0" width="17" height="11" viewBox="0 0 17 11"><path d="M1 9.500l7.500-7.500L16 9.500" fill="none" stroke="#fff" strokeWidth="2" /></svg>
      <svg className="ml-[27px] shrink-0" width="26" height="22" viewBox="0 0 26 22"><path d="M6 17a5.500 5.500 0 010-11C9 0 18 0 20 7l-8 10z" fill="#9b9b9b" /><path d="M6 17a5.500 5.500 0 010-11q5 0 8 6l-2 5z" fill="#d8d8d8" /><circle cx="18.500" cy="15" r="7" fill="#d92b2f" /><path d="M16 12.500l5 5M21 12.500l-5 5" stroke="#fff" strokeWidth="2" /></svg>
      <div className="mb-px ml-[26px] flex w-[36px] shrink-0 flex-col items-center text-[17px] leading-[23px]"><T w={35}>ENG</T><T w={22}>US</T></div>
      <svg className="ml-[27px] shrink-0" width="98" height="24" viewBox="0 0 98 24" fill="none" stroke="#fff" strokeWidth="2">
        <path d="M1 9q11-10 22 0M4.500 12.500q7.500-7 15 0M8 16q4-4 8 0" /><circle cx="12" cy="19.500" r="1.800" fill="#fff" stroke="none" />
        <path d="M37 9h4l5-5v16l-5-5h-4zM50 9q2 3 0 6M53.500 6q4.500 6 0 12M57 3.500q6.500 8.500 0 17" strokeWidth="1.700" />
        <path d="M80 6h12q2 0 2 2v9q0 2-2 2H76q-2 0-2-2v-6" /><path d="M80 9h11v7H77v-4z" fill="#fff" stroke="none" /><path d="M78 1l-5 7h3l-2 6 7-8h-4z" fill="#fff" stroke="none" /><path d="M96 10v5" strokeWidth="3" />
      </svg>
      <div className="mb-[2px] ml-[20px] flex w-[96px] shrink-0 flex-col items-end text-[17px] leading-[24px]"><T w={43}>21:52</T><T w={93}>04/04/2023</T></div>
      <div className="ml-[11px] flex h-6 w-6 shrink-0 items-center justify-center rounded-full bg-[#2cf08b] text-[15px] text-[#123]">2</div>
    </footer>
  );
}

export default function App() {
  return (
    <div className="flex h-[1080px] w-[1920px] flex-col overflow-hidden bg-white font-[Roboto,'Liberation_Sans',sans-serif] font-[350]">
      <TabStrip />
      <Toolbar />
      <div className="flex h-[877px] shrink-0">
        <div className="relative flex w-[1895px] flex-col overflow-hidden">
          <Header />
          <main className="flex h-[740px]">
            <LeftPanel />
            <MiddlePanel />
            <RightPanel />
          </main>
          <div className="absolute right-[15px] bottom-[15px] flex h-[84px] w-[84px] items-center justify-center rounded-full bg-gradient-to-bl from-[#06946f] to-[#36b84e] shadow-lg">
            <div className="mt-[-2px] ml-[5px]"><Blocks size={37} colors={["#fff", "#fff", "#fff", "#fff", "#fff", "#fff"]} r={1} /></div>
            <div className="absolute -top-1 -left-[18px] flex h-10 w-[41px] items-center justify-center rounded-full bg-[#079070] font-['Liberation_Sans',sans-serif] text-[20px] text-white">6</div>
          </div>
        </div>
        <div className="flex w-[25px] flex-col items-center justify-between bg-[#f0f0f0] pt-[10px] pb-[10px]">
          <div className="flex flex-col items-center gap-[9px]"><Arrow dir="up" c="#a0a0a0" /><div className="h-[431px] w-[21px] bg-[#c1c1c1]" /></div>
          <Arrow dir="down" c="#505050" />
        </div>
      </div>
      <div className="flex h-6 shrink-0 bg-[#dcdcdc]">
        <div className="flex w-[1895px] items-center bg-[#f0f0f0] pl-[9px]">
          <Arrow dir="left" c="#a0a0a0" /><div className="ml-[10px] h-[21px] w-[1779px] bg-[#c1c1c1]" /><div className="ml-[76px]"><Arrow dir="right" c="#505050" /></div>
        </div>
      </div>
      <TaskBar />
    </div>
  );
}
